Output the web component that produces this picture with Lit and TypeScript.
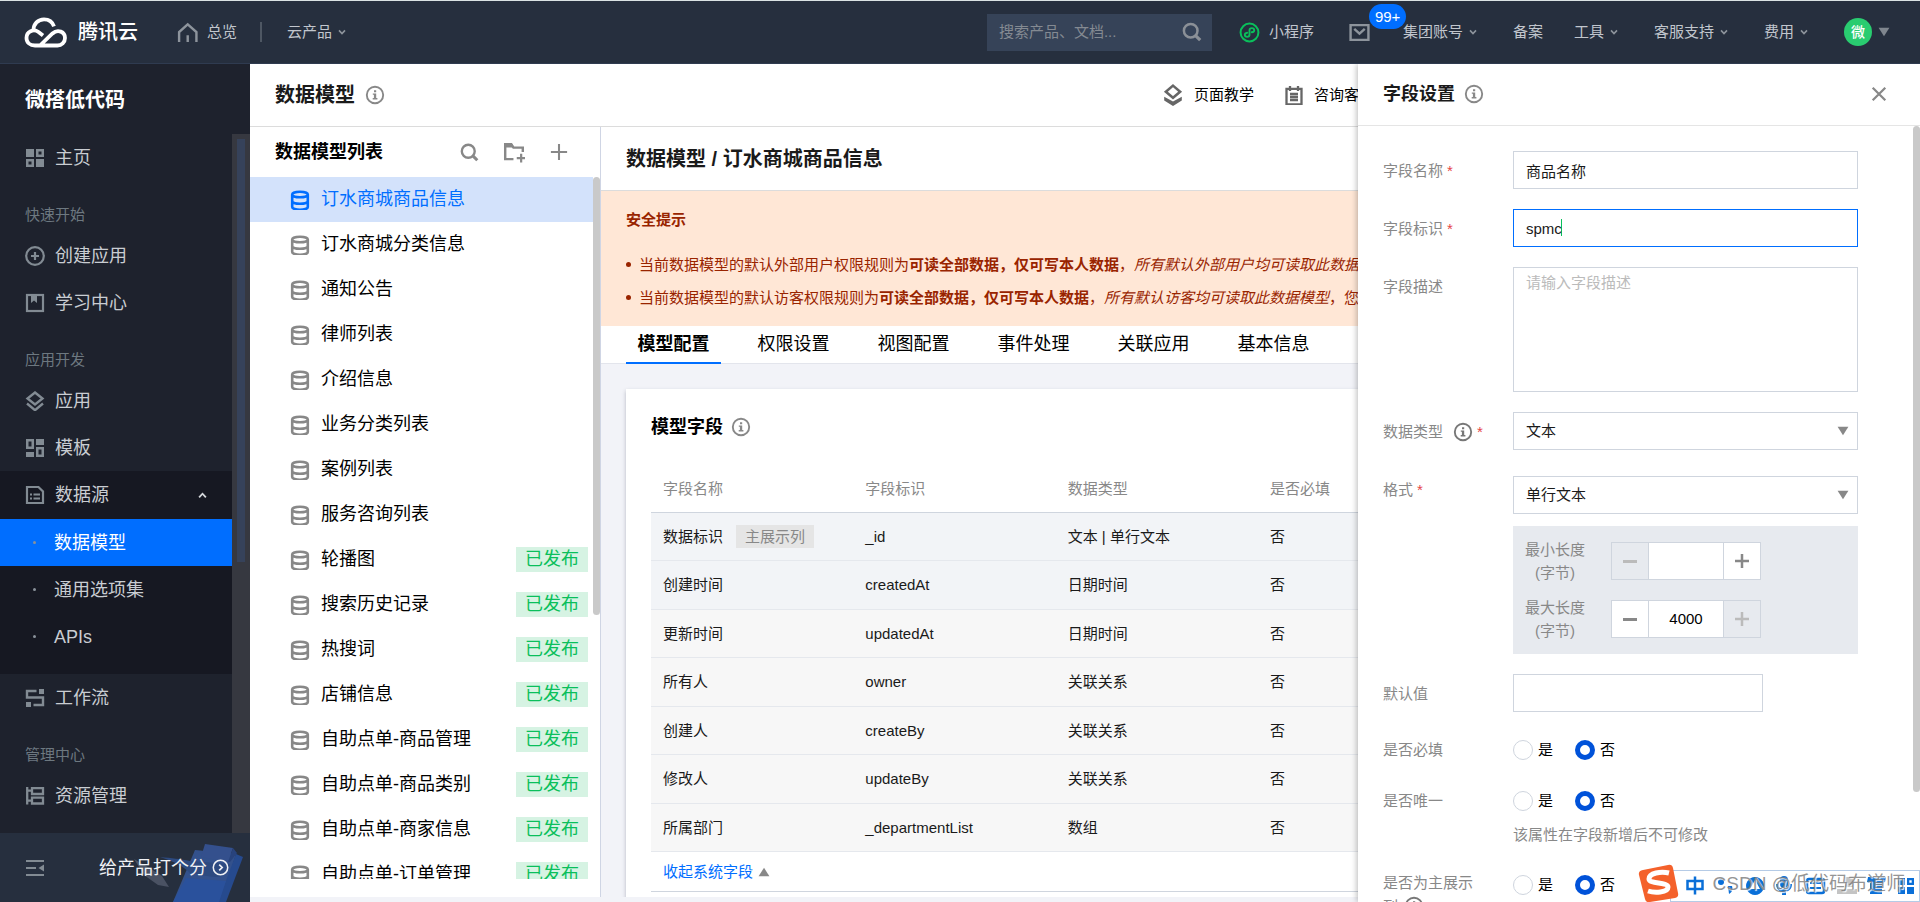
import { LitElement, html, css, svg, nothing, TemplateResult } from "lit";
import { customElement, state } from "lit/decorators.js";
import { classMap } from "lit/directives/class-map.js";

const shapes: Record<string, TemplateResult> = {
  info: svg`<circle cx="9" cy="9" r="8.200" fill="none" stroke="currentColor" stroke-width="1.900"/><path fill="currentColor" d="M8 4.200h2.200v2H8zM6.800 7.400h3.400v4.700h1.200v1.500H6.700v-1.500h1.200V8.800H6.800z"/>`,
  grid: svg`<path fill="currentColor" fill-rule="evenodd" d="M0 0h8v8H0zM10 0h8v8h-8zM12.500 2.500v3h3v-3zM0 10h8v8H0zM2.500 12.500v3h3v-3zM10 10h8v8h-8z"/>`,
  plusCircle: svg`<circle cx="9" cy="9" r="8.800" fill="none" stroke="currentColor" stroke-width="2.200"/><path stroke="currentColor" stroke-width="2.200" d="M9 5v8M5 9h8"/>`,
  book: svg`<rect x="1" y="1" width="16" height="16" fill="none" stroke="currentColor" stroke-width="2.200"/><path fill="currentColor" d="M5 1h6v8L8 6.500 5 9z"/>`,
  layers: svg`<path fill="none" stroke="currentColor" stroke-width="2.400" d="M9 .5 16.500 6.500 9 12.500 1.500 6.500zM1 11.500l8 6.700 8-6.700"/>`,
  template: svg`<path fill="currentColor" fill-rule="evenodd" d="M0 0h8v10H0zM2.500 2.500v5h3v-5zM10 0h8v6h-8zM0 13h8v5H0zM10 8h8v10h-8zM12.500 10.500v5h3v-5z"/>`,
  source: svg`<path fill="none" stroke="currentColor" stroke-width="2.200" d="M1 1h11.500L17 5.500V17H1z"/><path stroke="currentColor" stroke-width="2" d="M4 8.500h2M7.500 8.500H14M4 12.500h2M7.500 12.500H14"/>`,
  flow: svg`<path fill="currentColor" d="M13 0h5v5h-5zM0 13h5v5H0z"/><path fill="none" stroke="currentColor" stroke-width="2.400" d="M10.500 2H1v6.500h16V16H7.500"/>`,
  resource: svg`<path fill="none" stroke="currentColor" stroke-width="2.300" d="M1.200 0v17.500M1 3.700h5M1 13.700h5M6 1.200h11V7H6zM6 10.700h11v5.800H6z"/>`,
  box: svg`<rect x="0" y="0" width="18" height="18" fill="none" stroke="currentColor" stroke-width="2"/>`,
  collapse: svg`<path stroke="currentColor" stroke-width="2.200" d="M0 2h18M0 9h10M0 16h18"/><path fill="currentColor" d="M18 5.500v7L12.500 9z"/>`,
  search: svg`<circle cx="7.700" cy="7.700" r="6.800" fill="none" stroke="currentColor" stroke-width="2.500"/><path stroke="currentColor" stroke-width="3.200" d="m12.300 12.300 4.900 4.900"/>`,
  folder: svg`<path fill="none" stroke="currentColor" stroke-width="2.200" d="M8.500 15.500H1V2h5.500l2 3H17v4"/><path fill="currentColor" d="M0 1h7l2.500 4H0z"/><path stroke="currentColor" stroke-width="2" d="M15.500 10.500v8M11.500 14.500h8"/>`,
  plus: svg`<path stroke="currentColor" stroke-width="2.300" d="M9 0v18M0 9h18"/>`,
  close: svg`<path stroke="currentColor" stroke-width="2.500" d="m2 2 14 14M16 2 2 16"/>`,
  db: svg`<path fill="none" stroke="currentColor" stroke-width="2.600" d="M1.200 3.500c0-3.600 15.600-3.600 15.600 0v12.500c0 3.600-15.600 3.600-15.600 0zM1.200 4c1 3 14.600 3 15.600 0M1.200 10.500c1 3 14.600 3 15.600 0"/>`,
  stack: svg`<path fill="none" stroke="currentColor" stroke-width="2.300" d="M9 .5 15.500 6 9 11.500 2.500 6z"/><path fill="currentColor" d="M1 10.500 9 15l8-4.500V14l-8 5-8-5z"/>`,
  notepad: svg`<path fill="none" stroke="currentColor" stroke-width="2.300" d="M1.500 2.800h15v15.700h-15zM5 0v5M13 0v5M5 8h8M5 11h8M5 14h8"/>`,
  home: svg`<path fill="none" stroke="currentColor" stroke-width="2.300" d="M1 18V8.500L9.200 1.300l8.300 7.200V18M9.200 11.500V18"/>`,
  mini: svg`<circle cx="9" cy="9" r="8.500" fill="none" stroke="currentColor" stroke-width="1.900"/><path fill="none" stroke="currentColor" stroke-width="1.800" stroke-linecap="round" d="M6.800 9.200c-1.800.3-2.300 1.200-2.300 2 0 2.600 4.500 2.600 4.500 0V6.800c0-2.600 4.500-2.600 4.500 0 0 .8-.5 1.700-2.300 2"/>`,
  mail: svg`<path fill="none" stroke="currentColor" stroke-width="2.300" d="M.5 2h17v14H.5zM4 5.500 9 10l5-4.500"/>`,
  chevDown: svg`<path fill="none" stroke="currentColor" stroke-width="4" d="m1.500 5 7.500 8 7.500-8"/>`,
  chevUp: svg`<path fill="none" stroke="currentColor" stroke-width="4" d="m1.500 13 7.500-8 7.500 8"/>`,
  triDown: svg`<path fill="currentColor" d="M0 2h18L9 16z"/>`,
  triUp: svg`<path fill="currentColor" d="M0 16h18L9 2z"/>`,
  go: svg`<circle cx="9" cy="9" r="8.500" fill="none" stroke="currentColor" stroke-width="1.800"/><path fill="none" stroke="currentColor" stroke-width="2" d="m7.500 5.500 3.500 3.500-3.500 3.500"/>`,
};

const icon = (name: string, size = 18, cls = "") =>
  html`<svg class="icon ${cls}" width=${size} height=${size} viewBox="-1 -1 20 20" aria-hidden="true">${shapes[name]}</svg>`;

const models: [string, boolean][] = [
  ["订水商城商品信息", false],
  ["订水商城分类信息", false],
  ["通知公告", false],
  ["律师列表", false],
  ["介绍信息", false],
  ["业务分类列表", false],
  ["案例列表", false],
  ["服务咨询列表", false],
  ["轮播图", true],
  ["搜索历史记录", true],
  ["热搜词", true],
  ["店铺信息", true],
  ["自助点单-商品管理", true],
  ["自助点单-商品类别", true],
  ["自助点单-商家信息", true],
  ["自助点单-订单管理", true],
];

const fields = [
  ["数据标识", "_id", "文本 | 单行文本"],
  ["创建时间", "createdAt", "日期时间"],
  ["更新时间", "updatedAt", "日期时间"],
  ["所有人", "owner", "关联关系"],
  ["创建人", "createBy", "关联关系"],
  ["修改人", "updateBy", "关联关系"],
  ["所属部门", "_departmentList", "数组"],
];

const base = css`
  * { box-sizing: border-box; }
  h1, h2, h3, p, ul { margin: 0; padding: 0; }
  ul { list-style: none; }
  a { color: inherit; text-decoration: none; }
  button { border: 0; padding: 0; background: none; color: inherit; font: inherit; cursor: pointer; display: inline-flex; align-items: center; justify-content: center; }
  input, select, textarea { font: inherit; color: inherit; margin: 0; border-radius: 0; }
  .icon { flex: none; display: block; }
`;

@customElement("top-nav")
class TopNav extends LitElement {
  static styles = [base, css`
    :host { display: flex; align-items: center; height: 64px; flex: none; padding: 0 30px 0 24px; background: #262f3e; border-top: 1px solid #dbe3e4; border-bottom: 1px solid #2f3b50; color: #c1c6cd; font-size: 15px; }
    .brand { display: flex; align-items: center; gap: 11px; color: #fff; font-size: 20px; font-weight: 500; }
    .home { display: flex; align-items: center; gap: 9px; margin-left: 39px; }
    .home .icon, .chev { color: #8d949c; }
    .rule { width: 2px; height: 20px; margin: 0 25px 0 23px; background: #4e5763; }
    .item { display: flex; align-items: center; gap: 6px; white-space: nowrap; }
    .drop { padding-right: 5px; }
    .search { display: flex; align-items: center; width: 225px; height: 37px; margin: 0 27px 0 auto; padding: 0 10px 0 12px; background: #364358; color: #8b9097; }
    .search input { flex: 1; min-width: 0; padding: 0; border: 0; outline: 0; background: none; }
    .search input::placeholder { color: #848a92; opacity: 1; }
    .mini { display: flex; align-items: center; gap: 9px; }
    .mini .icon { color: #0abf5b; }
    .mail { position: relative; margin: 0 33px 0 35px; color: #8d949c; }
    .badge { position: absolute; left: 20px; top: -18px; height: 25px; padding: 0 6px; border-radius: 13px; background: #006eff; color: #fff; line-height: 25px; }
    .menu { display: flex; align-items: center; gap: 31px; }
    .avatar { display: grid; place-items: center; width: 28px; height: 28px; border-radius: 50%; background: #29cc70; color: #fff; font-size: 14px; font-weight: 500; }
    .caret { color: #7f868e; }
  `];
  render() {
    const drop = (t: string) => html`<a class="item drop" href="#">${t}${icon("chevDown", 8, "chev")}</a>`;
    return html`
      <a class="brand" href="#">
        <svg class="icon" width="43" height="31" viewBox="0 0 43 31" aria-hidden="true">
          <g fill="none" stroke="#fff" stroke-width="3.800">
            <path d="M16 28.500 28.500 16.500C34 11.500 41 15 41 21c0 4.500-3.500 7.500-7.500 7.500H11C6 28.500 2.500 25.500 2.500 21c0-6.500 7-9.500 12-6l4.500 3.500"/>
            <path d="M9.500 13c0-6 4.500-10.700 10.500-10.700 5 0 8.500 2.700 10 7"/>
          </g>
        </svg>腾讯云</a>
      <a class="home" href="#">${icon("home", 21)}总览</a>
      <span class="rule"></span>
      ${drop("云产品")}
      <label class="search"><input type="text" aria-label="搜索" placeholder="搜索产品、文档..." />${icon("search", 20)}</label>
      <a class="mini" href="#">${icon("mini", 21)}小程序</a>
      <a class="mail" href="#">${icon("mail", 21)}<span class="badge">99+</span></a>
      <nav class="menu">
        ${drop("集团账号")}<a class="item" href="#">备案</a>${drop("工具")}${drop("客服支持")}${drop("费用")}
        <a class="item" href="#"><span class="avatar">微</span>${icon("triDown", 12, "caret")}</a>
      </nav>`;
  }
}

@customElement("side-nav")
class SideNav extends LitElement {
  static styles = [base, css`
    :host { display: flex; flex-direction: column; width: 250px; flex: none; background: #1e222d; color: #c9cdd2; font-size: 18px; }
    h1 { flex: none; height: 70px; padding-left: 25px; font-size: 20px; line-height: 72px; color: #fff; }
    .body { display: flex; flex: 1; min-height: 0; }
    .nav { flex: 1; overflow: hidden; }
    .track { width: 18px; padding: 5px 5px 0; background: #363840; }
    .thumb { width: 8px; height: 61%; background: #36425a; }
    .item { display: flex; align-items: center; gap: 10px; height: 47px; padding: 0 25px; white-space: nowrap; }
    .item .icon { color: #828b93; }
    .cap { height: 51px; padding: 18px 25px 0; font-size: 15px; line-height: 32px; color: #6d7880; }
    .group { padding-bottom: 14px; background: #161822; }
    .parent { height: 48px; }
    .item .arrow { margin-left: auto; color: #d5d8dc; }
    .sub::before { content: ""; width: 3px; height: 3px; margin: 0 8px; border-radius: 50%; background: #89919a; }
    .on { background: #006eff; color: #fff; }
    .foot { position: relative; display: flex; align-items: center; flex: none; height: 69px; padding: 0 21px 0 25px; background: #262f3e; color: #f0f2f5; }
    .foot button .icon { color: #828b93; }
    .rate { position: relative; display: flex; align-items: center; gap: 5px; margin-left: auto; }
    .art { position: absolute; inset: 0; }
  `];
  render() {
    const item = (i: string, t: string) => html`<a class="item" href="#">${icon(i, 20)}${t}</a>`;
    return html`
      <h1>微搭低代码</h1>
      <div class="body">
        <nav class="nav">
          ${item("grid", "主页")}
          <div class="cap">快速开始</div>
          ${item("plusCircle", "创建应用")}${item("book", "学习中心")}
          <div class="cap">应用开发</div>
          ${item("layers", "应用")}${item("template", "模板")}
          <div class="group">
            <a class="item parent" href="#">${icon("source", 20)}数据源${icon("chevUp", 9, "arrow")}</a>
            <a class="item sub on" href="#">数据模型</a>
            <a class="item sub" href="#">通用选项集</a>
            <a class="item sub" href="#">APIs</a>
          </div>
          ${item("flow", "工作流")}
          <div class="cap">管理中心</div>
          ${item("resource", "资源管理")}${item("box", "")}
        </nav>
        <div class="track"><div class="thumb"></div></div>
      </div>
      <div class="foot">
        <svg class="art" width="250" height="69" viewBox="0 0 250 69" aria-hidden="true">
          <path d="M134 26 148 34 162 43 169 54 158 52 144 42z" fill="#4a5263"/>
          <path d="M195 17 236 21 221 69H173z" fill="#33518c"/>
          <path d="M236 21 243 24 226 69h-8z" fill="#264a8e"/>
          <path d="M205 11 233 15 228 29 201 24z" fill="#34508d"/>
          <path d="M233 15 237 20 230 29h-2z" fill="#28437d"/>
          <path d="M160 24c12 1 20 2 30 4l40 3c-2 8-6 13-13 13-10 0-17-3-27-4-8-8-18-12-30-16z" fill="#2d4a80"/>
          <path d="M186 45 226 48 219 69H173z" fill="#2a519c"/>
        </svg>
        <button aria-label="收起">${icon("collapse", 20)}</button>
        <a class="rate" href="#">给产品打个分${icon("go", 17)}</a>
      </div>`;
  }
}

@customElement("model-list")
class ModelList extends LitElement {
  @state() active = 0;
  static styles = [base, css`
    :host { display: flex; flex-direction: column; width: 351px; flex: none; margin-bottom: 5px; padding-bottom: 18px; background: #fff; border-right: 1px solid #cfd5e4; color: #000; font-size: 18px; }
    .head { display: flex; align-items: center; gap: 25px; height: 50px; flex: none; padding: 0 31px 0 25px; }
    h2 { margin-right: auto; font-size: 18px; line-height: 26px; }
    .head button { color: #888; width: 20px; }
    .body { display: flex; flex: 1; min-height: 0; }
    ul { flex: 1; overflow: hidden; }
    .row { display: flex; align-items: center; gap: 11px; width: 100%; height: 45px; padding: 0 5px 0 40px; justify-content: flex-start; }
    .row .icon { color: #888; }
    .on { background: #d3e2fb; color: #006eff; }
    .on .icon { color: #006eff; }
    .name { padding-bottom: 2px; }
    .tag { margin-left: auto; height: 25px; padding: 0 9px; background: #d6f3e3; color: #0abf5b; }
    .bar { width: 7px; }
    .thumb { height: 438px; border-radius: 4px; background: #c9c9c9; }
  `];
  render() {
    return html`
      <div class="head">
        <h2>数据模型列表</h2>
        <button aria-label="搜索">${icon("search", 19)}</button>
        <button aria-label="新建分组">${icon("folder", 22)}</button>
        <button aria-label="新建模型">${icon("plus", 18)}</button>
      </div>
      <div class="body">
        <ul>
          ${models.map(([name, pub], i) => html`<li>
            <button class=${classMap({ row: true, on: i === this.active })} @click=${() => (this.active = i)}>
              ${icon("db", 20)}<span class="name">${name}</span>${pub ? html`<span class="tag">已发布</span>` : nothing}
            </button></li>`)}
        </ul>
        <div class="bar"><div class="thumb"></div></div>
      </div>`;
  }
}

@customElement("model-detail")
class ModelDetail extends LitElement {
  @state() tab = 0;
  static styles = [base, css`
    :host { display: flex; flex-direction: column; flex: 1; min-width: 0; margin-bottom: 5px; overflow: hidden; font-size: 15px; color: #1a1a1a; }
    h2 { height: 64px; flex: none; padding-left: 25px; background: #fff; border-bottom: 1px solid #dcdcdc; font-size: 20px; line-height: 64px; }
    .alert { flex: none; height: 135px; padding: 17px 25px 0; background: #ffe7d6; color: #992400; white-space: nowrap; }
    .alert h3 { margin-bottom: 16px; font-size: 15px; line-height: 24px; }
    .alert li { display: flex; align-items: center; height: 33px; line-height: 33px; }
    .alert li::before { content: ""; width: 5px; height: 5px; margin-right: 8px; border-radius: 50%; background: #992400; }
    .tabs { display: flex; gap: 25px; flex: none; height: 38px; padding: 0 25px; background: #fff; border-bottom: 1px solid #e3e5ec; color: #000; font-size: 18px; }
    .tabs button { width: 95px; height: 38px; border-bottom: 2px solid transparent; white-space: nowrap; }
    .tabs .on { border-color: #006eff; font-weight: 700; }
    .card { flex: none; margin: 25px 25px 0; padding: 0 30px 25px 25px; background: #fff; box-shadow: 0 2px 4px rgba(54, 58, 80, 0.32); }
    .card h3 { display: flex; align-items: center; gap: 8px; height: 76px; color: #000; font-size: 18px; }
    .card h3 .icon, .tri { color: #888; }
    table { width: 100%; border-collapse: separate; border-spacing: 0; table-layout: fixed; }
    th, td { padding: 0 12px; text-align: left; font-weight: 400; white-space: nowrap; }
    th { height: 48px; color: #888; border-bottom: 1px solid #cfd5de; }
    td { height: 48px; background: #f7f7f7; border-bottom: 1px solid #e5e8ed; }
    tr:nth-child(even) td { height: 49px; }
    .hot td { background: #f2f4f7; }
    .chip { display: inline-block; margin-left: 13px; padding: 0 9px; background: #e5e5e5; color: #888; line-height: 23px; }
    tfoot td { height: 40px; background: #fff; border-color: #cfd5de; }
    .more { gap: 5px; color: #006eff; }
  `];
  render() {
    const tabs = ["模型配置", "权限设置", "视图配置", "事件处理", "关联应用", "基本信息"];
    return html`
      <h2>数据模型 / 订水商城商品信息</h2>
      <section class="alert">
        <h3>安全提示</h3>
        <ul>
          <li>当前数据模型的默认外部用户权限规则为<b>可读全部数据，仅可写本人数据</b>，<i>所有默认外部用户均可读取此数据</i></li>
          <li>当前数据模型的默认访客权限规则为<b>可读全部数据，仅可写本人数据</b>，<i>所有默认访客均可读取此数据模型</i>，您</li>
        </ul>
      </section>
      <nav class="tabs">
        ${tabs.map((t, i) => html`<button class=${classMap({ on: i === this.tab })} @click=${() => (this.tab = i)}>${t}</button>`)}
      </nav>
      <section class="card">
        <h3>模型字段${icon("info", 20)}</h3>
        <table>
          <thead><tr><th>字段名称</th><th>字段标识</th><th>数据类型</th><th>是否必填</th><th colspan="2"></th></tr></thead>
          <tbody>
            ${fields.map(([a, b, c], i) => html`<tr class=${classMap({ hot: i < 2 })}>
              <td>${a}${i === 0 ? html`<span class="chip">主展示列</span>` : nothing}</td>
              <td>${b}</td><td>${c}</td><td>否</td><td colspan="2"></td></tr>`)}
          </tbody>
          <tfoot><tr><td colspan="6"><button class="more">收起系统字段${icon("triUp", 12, "tri")}</button></td></tr></tfoot>
        </table>
      </section>`;
  }
}

@customElement("field-drawer")
class FieldDrawer extends LitElement {
  static styles = [base, css`
    :host { display: flex; flex-direction: column; background: #fff; box-shadow: -1px 0 6px rgba(0, 0, 0, 0.28); clip-path: inset(0 0 0 -10px); font-size: 15px; color: #1a1a1a; }
    .head { display: flex; align-items: center; gap: 9px; flex: none; height: 62px; padding: 0 32px 2px 25px; border-bottom: 1px solid #e5e5e5; }
    h2 { font-size: 18px; }
    .head .icon { color: #888; }
    .head button { margin-left: auto; }
    .body { display: flex; flex: 1; min-height: 0; overflow: hidden; }
    .bar { width: 7px; flex: none; }
    .thumb { height: 666px; border-radius: 4px; background: #c9c9c9; }
    form { display: flex; flex-direction: column; gap: 20px; flex: 1; height: max-content; padding: 25px 55px 0 25px; }
    .row { display: grid; grid-template-columns: 130px minmax(0, 1fr); align-items: start; }
    .label { display: flex; align-items: center; gap: 4px; padding-top: 8px; color: #888; line-height: 24px; }
    .label .icon { margin: 0 0 0 6px; color: #777; }
    .label em { color: #e54545; font-style: normal; line-height: 20px; }
    .text, textarea, select { display: block; width: 100%; height: 38px; padding: 0 12px; border: 1px solid #cfd5de; background: #fff; outline: 0; }
    textarea { height: 125px; padding-top: 3px; line-height: 24px; resize: none; }
    textarea::placeholder { color: #bbb; opacity: 1; }
    .text.focus { border-color: #006eff; caret-color: #0abf5b; background: linear-gradient(#0abf5b, #0abf5b) 47px 9px / 1px 17px no-repeat #fff; }
    .text.short { width: 250px; }
    .pick { position: relative; }
    select { appearance: none; }
    .pick .icon { position: absolute; right: 9px; top: 13px; color: #888; pointer-events: none; }
    .format { padding-top: 6px; }
    .limits { display: flex; flex-direction: column; gap: 16px; margin-top: 12px; padding: 12px 12px 16px; background: #e7eaef; }
    .limit { display: flex; align-items: flex-start; gap: 26px; height: 42px; }
    .limit label { width: 60px; color: #888; line-height: 23px; text-align: center; }
    .step { display: grid; grid-template-columns: 38px 74px 38px; height: 38px; margin-top: 4px; }
    .step button { border: 1px solid #cfd5de; background: #fff; color: #888; }
    .step button:disabled { background: #e7eaef; color: #bbb; }
    .step input { min-width: 0; border: solid #cfd5de; border-width: 1px 0; text-align: center; outline: 0; color: #000; }
    .radio .label { padding-top: 6px; }
    .picks { display: flex; gap: 22px; height: 31px; padding-top: 4px; color: #000; }
    .picks label { display: flex; align-items: center; gap: 5px; height: 27px; }
    .picks input { appearance: none; width: 20px; height: 20px; border: 1px solid #cfd5de; border-radius: 50%; background: #fff; }
    .picks input:checked { border: 5px solid #0052d9; }
    .hint { padding-top: 8px; color: #888; line-height: 25px; }
    .radio .wrap { display: block; width: 100px; padding-top: 4px; }
    .wrap .icon { display: inline-block; vertical-align: -4px; }
  `];
  render() {
    const yesNo = (name: string) => html`<div class="picks" role="radiogroup" aria-label=${name}>
      <label><input type="radio" name=${name} />是</label>
      <label><input type="radio" name=${name} checked />否</label></div>`;
    const minus = html`<svg class="icon" width="14" height="14" viewBox="0 0 14 14"><path stroke="currentColor" stroke-width="3" d="M0 7.500h14"/></svg>`;
    const plus = html`<svg class="icon" width="14" height="14" viewBox="0 0 14 14"><path stroke="currentColor" stroke-width="2.500" d="M0 7h14M7 0v14"/></svg>`;
    return html`
      <div class="head"><h2>字段设置</h2>${icon("info", 20)}<button aria-label="关闭">${icon("close", 18)}</button></div>
      <div class="body">
        <form>
          <div class="row"><label class="label" for="name">字段名称<em>*</em></label><input class="text" id="name" value="商品名称" /></div>
          <div class="row"><label class="label" for="code">字段标识<em>*</em></label><input class="text focus" id="code" value="spmc" /></div>
          <div class="row"><label class="label" for="desc">字段描述</label><textarea id="desc" placeholder="请输入字段描述"></textarea></div>
          <div class="row"><label class="label" for="type">数据类型${icon("info", 20)}<em>*</em></label>
            <div class="pick"><select id="type"><option>文本</option></select>${icon("triDown", 12)}</div></div>
          <div class="row"><label class="label" for="format">格式<em>*</em></label>
            <div class="format">
              <div class="pick"><select id="format"><option>单行文本</option></select>${icon("triDown", 12)}</div>
              <div class="limits">
                <div class="limit"><label for="min">最小长度<br />(字节)</label>
                  <div class="step"><button type="button" disabled aria-label="减少">${minus}</button><input id="min" /><button type="button" aria-label="增加">${plus}</button></div></div>
                <div class="limit"><label for="max">最大长度<br />(字节)</label>
                  <div class="step"><button type="button" aria-label="减少">${minus}</button><input id="max" value="4000" /><button type="button" disabled aria-label="增加">${plus}</button></div></div>
              </div>
            </div></div>
          <div class="row"><label class="label" for="def">默认值</label><input class="text short" id="def" /></div>
          <div class="row radio"><span class="label">是否必填</span>${yesNo("是否必填")}</div>
          <div class="row radio"><span class="label">是否唯一</span><div>${yesNo("是否唯一")}<p class="hint">该属性在字段新增后不可修改</p></div></div>
          <div class="row radio"><span class="label wrap">是否为主展示列${icon("info", 20)}</span>${yesNo("是否为主展示列")}</div>
        </form>
        <div class="bar"><div class="thumb"></div></div>
      </div>`;
  }
}

@customElement("ime-bar")
class ImeBar extends LitElement {
  static styles = [base, css`
    :host { display: block; width: 282px; height: 38px; color: #0a6fd8; }
    .bar { position: absolute; inset: 6px 0 0 32px; background: #fff; border: 1px solid #b5cbe6; }
    .glyphs { position: absolute; inset: 0; }
    .mark { position: absolute; right: 15px; top: 6px; color: rgba(120, 120, 120, 0.8); font-size: 19px; line-height: 28px; white-space: nowrap; text-shadow: 1px 1px 1px #fff; }
  `];
  render() {
    return html`
      <div class="bar"></div>
      <svg class="glyphs" width="282" height="38" viewBox="0 0 282 38" aria-hidden="true">
        <path d="M5 6 30 1q4-1 5 3l5 25q1 4-3 5L12 38q-4 1-5-3L1 11q-1-4 4-5z" fill="#f4612b"/>
        <path d="M31 9c-8-2-20 0-20 6 0 5 19 3 19 8 0 6-14 6-20 4" fill="none" stroke="#fff" stroke-width="5"/>
        <g fill="none" stroke="currentColor" stroke-width="2.500"><path d="M49.500 17h15v8h-15zM57 12.500v18"/></g>
        <g fill="currentColor">
          <circle cx="83" cy="18" r="3"/><path d="M90 22h4c1 4 0 6-3 8z"/>
          <path fill-rule="evenodd" d="M117 13a9 9 0 1 0 .1 0zM117 16l5 9h-10z"/>
          <rect x="142" y="12" width="8" height="12" rx="4"/>
          <path d="M138 20h2c1 7 11 7 12 0h2c0 5-3 7-6 8v3h-4v-3c-3-1-6-3-6-8z"/>
          <path d="M230 13h5q4 3 8 0h5l-1 5-3 1v11h-12V19l-3-1z"/>
          <path d="M260 14h7v7h-7zM269 14h7v7h-7zm2.300 2.300v2.400h2.400v-2.400zM260 23h7v7h-7zM269 23h7v7h-7z" fill-rule="evenodd"/>
        </g>
        <rect x="169" y="15" width="17" height="14" rx="2" fill="none" stroke="currentColor" stroke-width="2.500"/>
        <path stroke="currentColor" stroke-width="2" d="M172 19h11M172 24h11"/>
        <path fill="#c4c4c4" d="M199 25h20v5h-20zM207 13h8v10h-8z"/>
      </svg>
      <span class="mark">CSDN @低代码布道师</span>`;
  }
}

@customElement("app-root")
class AppRoot extends LitElement {
  static styles = [base, css`
    :host { position: relative; display: flex; flex-direction: column; height: 100vh; overflow: hidden; background: #f2f3f8; font-family: "Liberation Sans", "Noto Sans CJK SC", sans-serif; line-height: 24px; }
    .shell { position: relative; display: flex; flex: 1; min-height: 0; }
    main { display: flex; flex-direction: column; flex: 1; min-width: 0; }
    .top { display: flex; align-items: center; flex: none; gap: 10px; height: 63px; padding: 0 546px 0 25px; background: #fff; border-bottom: 1px solid #dcdcdc; color: #000; font-size: 15px; }
    h1 { font-size: 20px; color: #1a1a1a; }
    .top > .icon { color: #888; }
    .links { display: flex; gap: 30px; margin-left: auto; }
    .links a { display: flex; align-items: center; gap: 10px; white-space: nowrap; }
    .links .icon { color: #666; }
    .work { display: flex; flex: 1; min-height: 0; }
    .drawer { position: absolute; top: 0; right: 0; bottom: 0; width: 562px; }
    .ime { position: absolute; right: 0; bottom: 0; }
  `];
  render() {
    return html`
      <top-nav></top-nav>
      <div class="shell">
        <side-nav></side-nav>
        <main>
          <header class="top">
            <h1>数据模型</h1>${icon("info", 20)}
            <div class="links"><a href="#">${icon("stack", 22)}页面教学</a><a href="#">${icon("notepad", 20)}咨询客服</a></div>
          </header>
          <div class="work"><model-list></model-list><model-detail></model-detail></div>
        </main>
        <field-drawer class="drawer"></field-drawer>
      </div>
      <ime-bar class="ime"></ime-bar>`;
  }
}
